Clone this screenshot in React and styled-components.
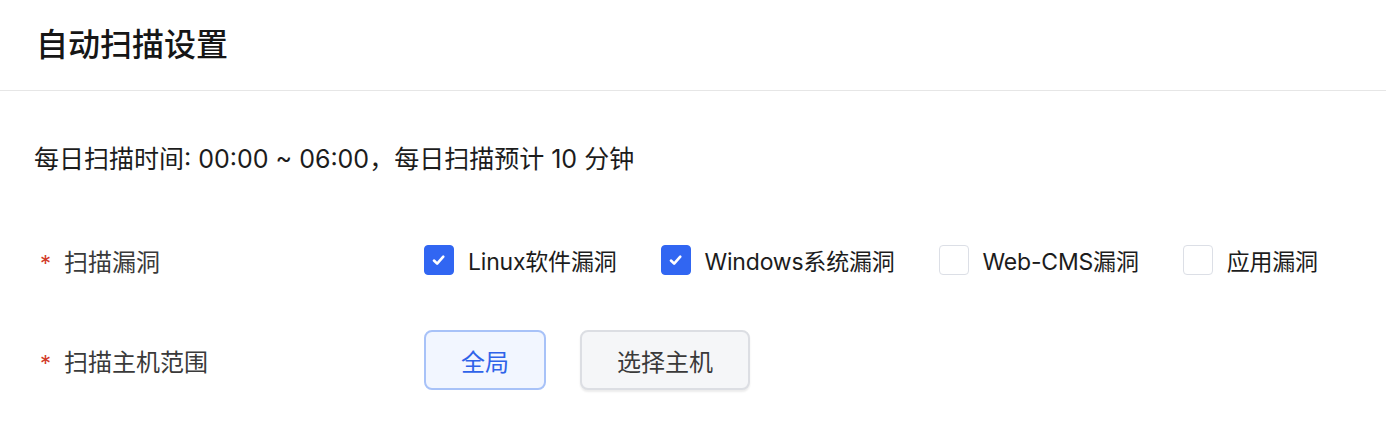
import React, {useState} from 'react'
import styled, {createGlobalStyle} from 'styled-components'

const GlobalStyle = createGlobalStyle`
    body {
        margin: 0;
        background: #ffffff;
        font-family: Inter, "Noto Sans CJK SC", sans-serif;
        color: #1f1f1f;
    }
`;

const options = [
    {key: 'linux', label: 'Linux软件漏洞'},
    {key: 'windows', label: 'Windows系统漏洞'},
    {key: 'cms', label: 'Web-CMS漏洞'},
    {key: 'app', label: '应用漏洞'},
]

function App() {
    const [checked, setChecked] = useState({linux: true, windows: true, cms: false, app: false})
    const [scope, setScope] = useState('all')

    const toggle = key => setChecked({...checked, [key]: !checked[key]})

    return (
        <>
        <GlobalStyle/>
        <Page>
            <Header>
                <Title>自动扫描设置</Title>
            </Header>
            <Body>
                <Info>每日扫描时间: 00:00 ~ 06:00，每日扫描预计 10 分钟</Info>
                <FormRow>
                    <Label><Star>*</Star>扫描漏洞</Label>
                    <Options>
                        {options.map(opt => (
                            <Option key={opt.key} onClick={() => toggle(opt.key)}>
                                <Box $checked={checked[opt.key]}>
                                    {checked[opt.key] &&
                                        <svg width="30" height="30" viewBox="0 0 30 30">
                                            <path d="M9.6 15.6 L13 18.9 L19.6 11.4" fill="none" stroke="#fff" strokeWidth="2.8" strokeLinecap="round" strokeLinejoin="round"/>
                                        </svg>}
                                </Box>
                                <OptionText>{opt.label}</OptionText>
                            </Option>
                        ))}
                    </Options>
                </FormRow>
                <FormRow $gap>
                    <Label><Star>*</Star>扫描主机范围</Label>
                    <Buttons>
                        <ScopeButton $active={scope === 'all'} $w={122} onClick={() => setScope('all')}>全局</ScopeButton>
                        <ScopeButton $active={scope === 'pick'} $w={170} onClick={() => setScope('pick')}>选择主机</ScopeButton>
                    </Buttons>
                </FormRow>
            </Body>
        </Page>
        </>
    )
}

const Page = styled.div`
    width: 1386px;
    height: 432px;
    overflow: hidden;
`;
const Header = styled.div`
    height: 91px;
    padding: 0 36px 7px;
    box-sizing: border-box;
    display: flex;
    align-items: center;
    border-bottom: 1px solid #e6e6e6;
`;
const Title = styled.div`
    font-size: 32px;
    font-weight: 500;
    color: #161616;
`;
const Body = styled.div`
    padding: 0 34px;
`;
const Info = styled.div`
    margin-top: 53px;
    font-size: 25px;
    line-height: 30px;
    color: #1c1c1c;
`;
const FormRow = styled.div`
    display: flex;
    align-items: center;
    height: 60px;
    margin-top: ${props => props.$gap ? '40px' : '56px'};
`;
const Label = styled.div`
    width: 384px;
    padding-left: 6px;
    display: flex;
    align-items: center;
    font-size: 24px;
    color: #3a3a3a;
`;
const Star = styled.span`
    color: #d23a2a;
    font-size: 22px;
    margin-right: 13px;
    position: relative;
    top: 3px;
`;
const Options = styled.div`
    display: flex;
    align-items: center;
    gap: 44px;
`;
const Option = styled.div`
    display: flex;
    align-items: center;
    gap: 14px;
    cursor: pointer;
`;
const Box = styled.div`
    width: 30px;
    height: 30px;
    box-sizing: border-box;
    border-radius: 4px;
    display: flex;
    align-items: center;
    justify-content: center;
    overflow: hidden;
    background: ${props => props.$checked ? '#3166f2' : '#ffffff'};
    border: 1px solid ${props => props.$checked ? '#3166f2' : '#dcdfe6'};
`;
const OptionText = styled.span`
    font-size: 23px;
    letter-spacing: -0.2px;
    color: #1c1c1c;
`;
const Buttons = styled.div`
    display: flex;
    gap: 34px;
`;
const ScopeButton = styled.button`
    width: ${props => props.$w}px;
    height: 60px;
    border-radius: 8px;
    font-family: inherit;
    font-size: 24px;
    cursor: pointer;
    background: ${props => props.$active ? '#f2f6ff' : '#f5f6f8'};
    border: 2px solid ${props => props.$active ? '#a8c2f8' : '#dcdee3'};
    color: ${props => props.$active ? '#2f63e9' : '#3a3a3a'};
    box-shadow: ${props => props.$active ? 'none' : '0 2px 2px rgba(0,0,0,0.08)'};
`;

export default App
